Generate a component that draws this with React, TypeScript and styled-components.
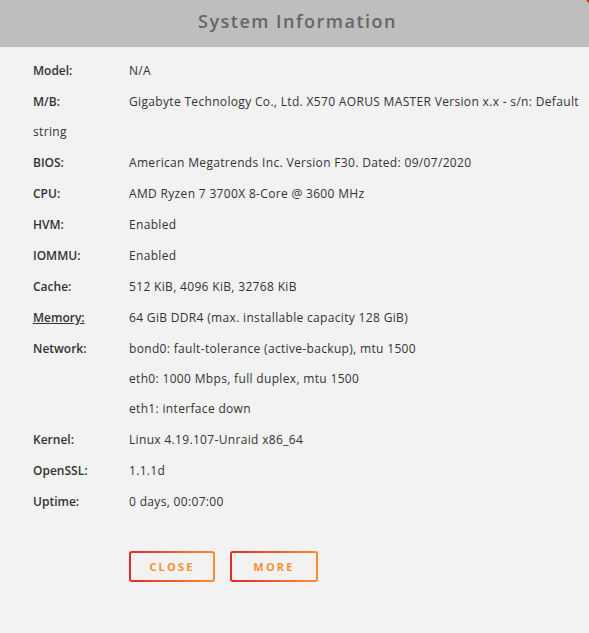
import * as React from 'react';
import styled, { createGlobalStyle } from 'styled-components';

const Global = createGlobalStyle`
  html, body {
    margin: 0;
    padding: 0;
    background: #f2f2f2;
  }
  body {
    font-family: "Open Sans", "Liberation Sans", sans-serif;
    -webkit-font-smoothing: antialiased;
  }
`

const Dialog = styled.div`
  position: relative;
  width: 589px;
  min-height: 633px;
  background: #f2f2f2;
  overflow: hidden;
`

const Header = styled.div`
  height: 47px;
  background: #bebebe;
  display: flex;
  align-items: center;
  justify-content: center;
`

const Title = styled.div`
  font-size: 18px;
  font-weight: 600;
  color: #666666;
  letter-spacing: 1.5px;
  margin-top: -6px;
  margin-left: 6px;
`

const CornerMark = styled.div`
  position: absolute;
  top: -6px;
  right: -6px;
  width: 9px;
  height: 9px;
  border-radius: 50%;
  background: #d0341f;
`

const Info = styled.div`
  padding: 9px 0 0 33px;
  font-size: 12px;
  letter-spacing: 0.33px;
  color: #333333;
`

const Row = styled.div`
  line-height: 30px;
  margin-bottom: 1px;
  padding-right: 4px;
`

const Label = styled.span<{ $link?: boolean }>`
  display: inline-block;
  width: 96px;
  font-weight: 600;
  letter-spacing: 0;
  text-decoration: ${p => (p.$link ? 'underline' : 'none')};
`

const Lines = styled.span`
  display: inline-block;
  vertical-align: top;
`

const Actions = styled.div`
  display: flex;
  gap: 15px;
  padding: 33px 0 0 129px;
`

const Button = styled.button<{ $w: number }>`
  width: ${p => p.$w}px;
  height: 31px;
  padding: 0;
  border: 2px solid transparent;
  border-radius: 3px;
  background:
    linear-gradient(#f2f2f2, #f2f2f2) padding-box,
    linear-gradient(90deg, #e22828, #ff8d30) border-box;
  color: #ff8d30;
  font-family: "Open Sans", "Liberation Sans", sans-serif;
  font-size: 11px;
  font-weight: 700;
  letter-spacing: 2.2px;
  cursor: pointer;
`

const rows: [string, string][] = [
  ['Model:', 'N/A'],
  ['M/B:', 'Gigabyte Technology Co., Ltd. X570 AORUS MASTER Version x.x - s/n: Default string'],
  ['BIOS:', 'American Megatrends Inc. Version F30. Dated: 09/07/2020'],
  ['CPU:', 'AMD Ryzen 7 3700X 8-Core @ 3600 MHz'],
  ['HVM:', 'Enabled'],
  ['IOMMU:', 'Enabled'],
  ['Cache:', '512 KiB, 4096 KiB, 32768 KiB'],
]

const after: [string, string][] = [
  ['Kernel:', 'Linux 4.19.107-Unraid x86_64'],
  ['OpenSSL:', '1.1.1d'],
  ['Uptime:', '0 days, 00:07:00'],
]

const App = () => {
  return (
    <Dialog>
      <Global />
      <CornerMark />
      <Header>
        <Title>System Information</Title>
      </Header>
      <Info>
        {rows.map(([k, v]) => (
          <Row key={k}>
            <Label>{k}</Label>
            {v}
          </Row>
        ))}
        <Row>
          <Label $link>Memory:</Label>
          64 GiB DDR4 (max. installable capacity 128 GiB)
        </Row>
        <Row>
          <Label>Network:</Label>
          <Lines>
            bond0: fault-tolerance (active-backup), mtu 1500
            <br />
            eth0: 1000 Mbps, full duplex, mtu 1500
            <br />
            eth1: interface down
          </Lines>
        </Row>
        {after.map(([k, v]) => (
          <Row key={k}>
            <Label>{k}</Label>
            {v}
          </Row>
        ))}
      </Info>
      <Actions>
        <Button $w={86}>CLOSE</Button>
        <Button $w={88}>MORE</Button>
      </Actions>
    </Dialog>
  );
}

export default App;
